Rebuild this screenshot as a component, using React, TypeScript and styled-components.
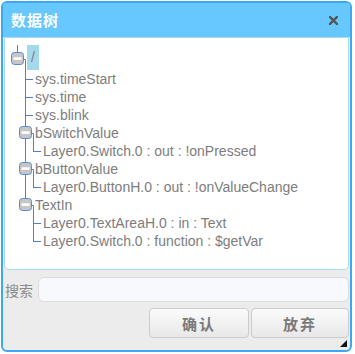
import React from "react";
import styled, { createGlobalStyle } from "styled-components";

const Global = createGlobalStyle`
  html, body { margin: 0; padding: 0; background: #ffffff; }
  body { font-family: "Liberation Sans", Arial, "Noto Sans CJK SC", sans-serif; }
  * { box-sizing: border-box; }
`;

const Dialog = styled.div`
  margin: 1px 0 0 1px;
  width: 351px;
  height: 351px;
  border: 2px solid #3ca7f3;
  border-radius: 6px;
  background: #ececec;
  display: flex;
  flex-direction: column;
  overflow: hidden;
`;

const TitleBar = styled.div`
  height: 34px;
  flex: none;
  background: #66c8ff;
  display: flex;
  align-items: center;
  justify-content: space-between;
  padding: 0 12px 0 8px;
`;

const Title = styled.div`
  color: #ffffff;
  font-family: "Noto Sans CJK SC", "Liberation Sans", sans-serif;
  font-weight: 700;
  font-size: 15px;
  letter-spacing: 1px;
  line-height: 34px;
`;

const CloseButton = styled.button`
  border: 0;
  padding: 0;
  background: transparent;
  width: 10px;
  height: 10px;
  display: flex;
  align-items: center;
  justify-content: center;
  cursor: pointer;
`;

const Panel = styled.div`
  flex: none;
  height: 233px;
  margin: 0 1px;
  background: #ffffff;
  border: 1px solid #a9daee;
  border-radius: 0 0 5px 5px;
  padding-top: 7px;
`;

const TreeList = styled.div`
  display: flex;
  flex-direction: column;
`;

const Row = styled.div<{ $h: number }>`
  display: flex;
  align-items: center;
  height: ${(p) => p.$h}px;
  color: #7d7d7d;
  font-size: 14px;
  line-height: ${(p) => p.$h}px;
  white-space: nowrap;
`;

const Guide = styled.svg`
  flex: none;
  display: block;
`;

const Label = styled.span<{ $selected?: boolean }>`
  display: inline-block;
  height: 100%;
  padding: ${(p) => (p.$selected ? "0 4px" : "0")};
  background: ${(p) => (p.$selected ? "#a3d9ea" : "transparent")};
`;

const SearchRow = styled.div`
  flex: none;
  margin-top: 7px;
  height: 25px;
  display: flex;
  align-items: center;
  padding: 0 1px 0 2px;
  gap: 5px;
`;

const SearchLabel = styled.span`
  font-family: "Noto Sans CJK SC", sans-serif;
  font-size: 14px;
  color: #8a8a8a;
  width: 28px;
`;

const SearchInput = styled.input`
  flex: 1;
  height: 25px;
  border: 1px solid #dcdcdc;
  border-radius: 6px;
  background: #f8f9fd;
  outline: none;
  padding: 0 6px;
  font-size: 13px;
`;

const ButtonRow = styled.div`
  flex: none;
  margin-top: 6px;
  height: 30px;
  display: flex;
  justify-content: flex-end;
  gap: 2px;
  padding-right: 1px;
`;

const Button = styled.button<{ $w: number }>`
  width: ${(p) => p.$w}px;
  height: 30px;
  border: 1px solid #cccccc;
  border-radius: 4px;
  background: linear-gradient(#fbfbfb, #e8e8e8);
  color: #7a7a7a;
  font-family: "Noto Sans CJK SC", sans-serif;
  font-weight: 700;
  font-size: 15px;
  letter-spacing: 2px;
  cursor: pointer;
`;

const Footer = styled.div`
  flex: 1;
  display: flex;
  justify-content: flex-end;
  align-items: flex-end;
  padding: 0 3px 3px 0;
`;

const Grip = styled.div`
  width: 0;
  height: 0;
  border-style: solid;
  border-width: 0 0 7px 7px;
  border-color: transparent transparent #111 transparent;
`;

const LINE = "#4f80cc";

const Toggle: React.FC<{ x: number; y: number }> = ({ x, y }) => (
  <g>
    <rect x={x} y={y} width={12} height={12} rx={3} fill="#c6c6c6" stroke="#5a8cd6" />
    <rect x={x + 2} y={y + 4.8} width={8} height={2.6} fill="#ffffff" />
  </g>
);

type Node =
  | { kind: "root"; label: string }
  | { kind: "leaf1"; label: string; last?: boolean }
  | { kind: "folder1"; label: string; last?: boolean }
  | { kind: "leaf2"; label: string; last?: boolean; parentLast?: boolean };

const nodes: Node[] = [
  { kind: "root", label: "/" },
  { kind: "leaf1", label: "sys.timeStart" },
  { kind: "leaf1", label: "sys.time" },
  { kind: "leaf1", label: "sys.blink" },
  { kind: "folder1", label: "bSwitchValue" },
  { kind: "leaf2", label: "Layer0.Switch.0 : out : !onPressed", last: true },
  { kind: "folder1", label: "bButtonValue" },
  { kind: "leaf2", label: "Layer0.ButtonH.0 : out : !onValueChange", last: true },
  { kind: "folder1", label: "TextIn", last: true },
  { kind: "leaf2", label: "Layer0.TextAreaH.0 : in : Text", parentLast: true },
  { kind: "leaf2", label: "Layer0.Switch.0 : function : $getVar", last: true, parentLast: true },
];

const GuideFor: React.FC<{ node: Node }> = ({ node }) => {
  if (node.kind === "root") {
    return (
      <Guide width={22} height={25}>
        <line x1={12.5} y1={0} x2={12.5} y2={7} stroke={LINE} />
        <line x1={17.5} y1={14.5} x2={20.5} y2={14.5} stroke={LINE} />
        <line x1={20.5} y1={14.5} x2={20.5} y2={25} stroke={LINE} />
        <Toggle x={6.5} y={7.5} />
      </Guide>
    );
  }
  if (node.kind === "leaf1") {
    return (
      <Guide width={30} height={18}>
        <line x1={20.5} y1={0} x2={20.5} y2={node.last ? 9.5 : 18} stroke={LINE} />
        <line x1={20.5} y1={9.5} x2={28} y2={9.5} stroke={LINE} />
      </Guide>
    );
  }
  if (node.kind === "folder1") {
    return (
      <Guide width={30} height={18}>
        <line x1={20.5} y1={0} x2={20.5} y2={3} stroke={LINE} />
        {!node.last && <line x1={20.5} y1={15} x2={20.5} y2={18} stroke={LINE} />}
        <line x1={26.5} y1={9.5} x2={28.5} y2={9.5} stroke={LINE} />
        <line x1={28.5} y1={9.5} x2={28.5} y2={18} stroke={LINE} />
        <Toggle x={14.5} y={2.5} />
      </Guide>
    );
  }
  return (
    <Guide width={38} height={18}>
      {!node.parentLast && <line x1={20.5} y1={0} x2={20.5} y2={18} stroke={LINE} />}
      <line x1={28.5} y1={0} x2={28.5} y2={node.last ? 10 : 18} stroke={LINE} />
      <line x1={28.5} y1={9.5} x2={36} y2={9.5} stroke={LINE} />
    </Guide>
  );
};

export default function App() {
  return (
    <>
      <Global />
      <Dialog>
        <TitleBar>
          <Title>数据树</Title>
          <CloseButton aria-label="close">
            <svg width="9" height="9" viewBox="0 0 9 9">
              <path d="M1 1 L8 8 M8 1 L1 8" stroke="#555" strokeWidth="2.4" strokeLinecap="square" />
            </svg>
          </CloseButton>
        </TitleBar>
        <Panel>
          <TreeList>
            {nodes.map((n, i) => (
              <Row key={i} $h={n.kind === "root" ? 25 : 18}>
                <GuideFor node={n} />
                <Label $selected={n.kind === "root"}>{n.label}</Label>
              </Row>
            ))}
          </TreeList>
        </Panel>
        <SearchRow>
          <SearchLabel>搜索</SearchLabel>
          <SearchInput />
        </SearchRow>
        <ButtonRow>
          <Button $w={100}>确认</Button>
          <Button $w={98}>放弃</Button>
        </ButtonRow>
        <Footer>
          <Grip />
        </Footer>
      </Dialog>
    </>
  );
}
